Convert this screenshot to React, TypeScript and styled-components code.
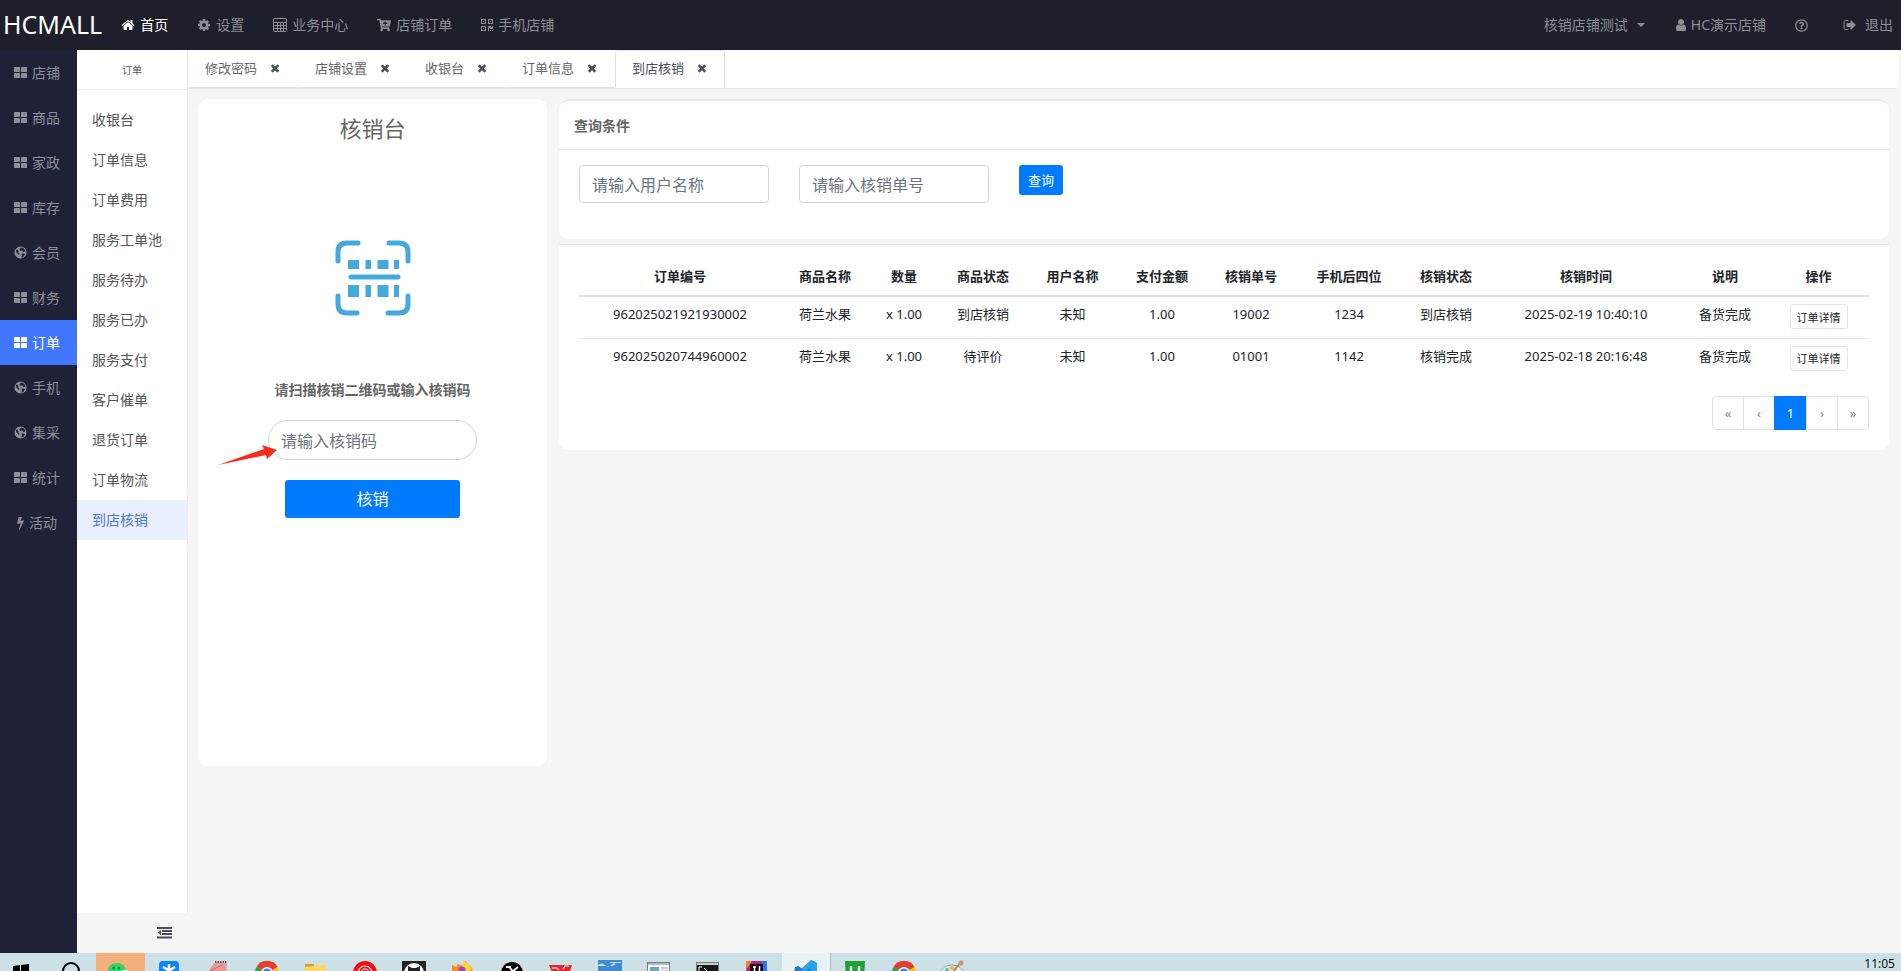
import React from "react";
import styled, { createGlobalStyle } from "styled-components";
import { FaCartPlus, FaRegQuestionCircle } from "react-icons/fa";

const Global = createGlobalStyle`
  *, *::before, *::after { box-sizing: border-box; }
  body {
    margin: 0;
    background: #f5f5f5;
    color: #212529;
    font: 13px/20px "Noto Sans", "Noto Sans CJK SC", sans-serif;
  }
  a { color: inherit; text-decoration: none; }
  button, input { font-family: inherit; }
  svg { display: block; flex: none; }
`;

/* ---------- icons ---------- */

const PATHS = {
  home: "M1472 992v480q0 26-19 45t-45 19h-384v-384h-256v384h-384q-26 0-45-19t-19-45v-480q0-1 .5-3t.5-3l575-474 575 474q1 2 1 6zm223-69l-62 74q-8 9-21 11h-3q-13 0-21-7l-692-577-692 577q-12 8-24 7-13-2-21-11l-62-74q-8-10-7-23.5t11-21.5l719-599q32-26 76-26t76 26l244 204v-195q0-14 9-23t23-9h192q14 0 23 9t9 23v408l219 182q10 8 11 21.5t-7 23.5z",
  gear: "M1152 896q0-106-75-181t-181-75-181 75-75 181 75 181 181 75 181-75 75-181zm512-109v222q0 12-8 23t-20 13l-185 28q-19 54-39 91 35 50 107 138 10 12 10 25t-9 23q-27 37-99 108t-94 71q-12 0-26-9l-138-108q-44 23-91 38-16 136-29 186-7 28-36 28h-222q-14 0-24.5-8.5t-11.5-21.5l-28-184q-49-16-90-37l-141 107q-10 9-25 9-14 0-25-11-126-114-165-168-7-10-7-23 0-12 8-23 15-21 51-66.5t54-70.5q-27-50-41-99l-183-27q-13-2-21-12.5t-8-23.5v-222q0-12 8-23t19-13l186-28q14-46 39-92-40-57-107-138-10-12-10-24 0-10 9-23 26-36 98.5-107.5t94.5-71.5q13 0 26 10l138 107q44-23 91-38 16-136 29-186 7-28 36-28h222q14 0 24.5 8.5t11.5 21.5l28 184q49 16 90 37l142-107q9-9 24-9 13 0 25 10 129 119 165 170 7 8 7 22 0 12-8 23-15 21-51 66.5t-54 70.5q26 50 41 98l183 28q13 2 21 12.5t8 23.5z",
  times: "M1490 1322q0 40-28 68l-136 136q-28 28-68 28t-68-28l-294-294-294 294q-28 28-68 28t-68-28l-136-136q-28-28-28-68t28-68l294-294-294-294q-28-28-28-68t28-68l136-136q28-28 68-28t68 28l294 294 294-294q28-28 68-28t68 28l136 136q28 28 28 68t-28 68l-294 294 294 294q28 28 28 68z",
  user: "M1536 1399q0 109-62.5 187t-150.5 78h-854q-88 0-150.5-78t-62.5-187q0-85 8.5-160.5t31.5-152 58.5-131 94-89 134.5-34.5q131 128 313 128t313-128q76 0 134.5 34.5t94 89 58.5 131 31.5 152 8.5 160.5zm-256-887q0 159-112.5 271.5t-271.5 112.5-271.5-112.5-112.5-271.5 112.5-271.5 271.5-112.5 271.5 112.5 112.5 271.5z",
  signOut: "M704 1440q0 4 1 20t.5 26.5-3 23.5-10 19.5-20.5 6.5h-320q-119 0-203.5-84.5t-84.5-203.5v-704q0-119 84.5-203.5t203.5-84.5h320q13 0 22.5 9.5t9.5 22.5q0 4 1 20t.5 26.5-3 23.5-10 19.5-20.5 6.5h-320q-66 0-113 47t-47 113v704q0 66 47 113t113 47h312l11.5 1 11.5 3 8 5.5 7 9 2 13.5zm928-544q0 26-19 45l-544 544q-19 19-45 19t-45-19-19-45v-288h-448q-26 0-45-19t-19-45v-384q0-26 19-45t45-19h448v-288q0-26 19-45t45-19 45 19l544 544q19 19 19 45z",
  bolt: "M1333 566q18 20 7 44l-540 1157q-13 25-42 25-4 0-14-2-17-5-25.5-19t-4.5-30l197-808-406 101q-4 1-12 1-18 0-31-11-18-15-13-39l201-825q4-14 16-23t28-9h328q19 0 32 12.5t13 29.5q0 8-5 18l-171 463 396-98q8-2 12-2 19 0 34 15z",
};

const Glyph = ({ name, size = 14 }: { name: keyof typeof PATHS; size?: number }) => (
  <svg width={size} height={size} viewBox="0 0 1792 1792" fill="currentColor" aria-hidden="true">
    <path d={PATHS[name]} />
  </svg>
);

const GridIcon = () => (
  <svg width="13" height="13" viewBox="0 0 13 13" fill="currentColor" aria-hidden="true">
    <rect x="0" y="1" width="6" height="5" rx="0.6" />
    <rect x="7" y="1" width="6" height="5" rx="0.6" />
    <rect x="0" y="7" width="6" height="5" rx="0.6" />
    <rect x="7" y="7" width="6" height="5" rx="0.6" />
  </svg>
);

const GlobeIcon = () => (
  <svg width="13" height="13" viewBox="0 0 13 13" fill="currentColor" fillRule="evenodd" aria-hidden="true">
    <path d="M6.500 0.500a6 6 0 1 0 0 12a6 6 0 1 0 0-12zM7 1.500L5.500 3.200L6.200 5L8.200 4.300L9.500 6.200L11.300 5.500L11 3.800L9 2zM7.500 7.200L11 8L9.600 10.500L7.300 11.700L8 9.500zM1.700 4L2.500 6.500L5 9L5.500 7.500L4.200 6.500L4.500 5.500L3.500 3.500z" />
  </svg>
);

const BoltIcon = () => (
  <svg width="7" height="14" viewBox="448 0 896 1792" fill="currentColor" aria-hidden="true">
    <path d={PATHS.bolt} />
  </svg>
);

const CalculatorIcon = () => (
  <svg width="14" height="14" viewBox="0 0 14 14" fill="none" stroke="currentColor" aria-hidden="true">
    <rect x="0.5" y="0.5" width="13" height="13" rx="0.8" />
    <path d="M1 4.500h12M1 7.500h12M1 10.500h12M4.500 5v8.500M7.500 5v8.500M10.500 5v8.500" />
  </svg>
);

const QrIcon = () => (
  <svg width="12" height="12" viewBox="0 0 12 12" fill="currentColor" aria-hidden="true">
    <g fill="none" stroke="currentColor">
      <rect x="0.5" y="0.5" width="4" height="4" />
      <rect x="7.5" y="0.5" width="4" height="4" />
      <rect x="0.5" y="7.5" width="4" height="4" />
    </g>
    <path d="M2 2h1v1H2zM9 2h1v1H9zM2 9h1v1H2zM7 7h3v1h1V7h1v3H9V9H8v3H7zM9 11h1v1H9zM11 11h1v1h-1z" />
  </svg>
);

const OutdentIcon = () => (
  <svg width="15" height="12" viewBox="0 0 15 12" fill="currentColor" aria-hidden="true">
    <path d="M0 0h15v2H0zM5 3h10v2H5zM5 6h10v2H5zM0 9.500h15v2H0zM4 3v5L0.500 5.500z" />
  </svg>
);

const ScanIcon = () => (
  <svg width="76" height="76" viewBox="0 0 76 76" fill="#45a9dd" aria-hidden="true">
    <g fill="none" stroke="#45a9dd" strokeWidth="5" strokeLinecap="round">
      <path d="M3 21V12q0-9 9-9h11M54 3h10q9 0 9 9v9M3 56v8q0 9 9 9h10M53 73h11q9 0 9-9v-8M16 37h47" />
    </g>
    <path d="M13 20h11v9H13zM30.500 20h5.500v9h-5.500zM42.500 20h11v9h-11zM59 20h5v9h-5zM13 45h11v12H13zM30.500 45h5.500v12h-5.500zM42.500 45h11v12h-11zM59 45h5v12h-5z" />
  </svg>
);

/* ---------- top bar ---------- */

const Page = styled.div`
  display: flex;
  flex-direction: column;
  min-height: 100vh;
`;

const TopBar = styled.header`
  display: flex;
  align-items: center;
  justify-content: space-between;
  height: 50px;
  padding: 0 8px 0 3px;
  background: #1e1f2b;
  color: #8d8e93;
  font-size: 14px;
`;

const TopGroup = styled.nav`
  display: flex;
  align-items: center;
  gap: 29px;
`;

const Brand = styled.a`
  margin-right: -10px;
  padding-bottom: 2px;
  color: #fff;
  font-size: 25px;
  line-height: 30px;
`;

const TopLink = styled.a<{ $active?: boolean; $gap?: number }>`
  display: flex;
  align-items: center;
  gap: ${(p) => p.$gap ?? 5}px;
  color: ${(p) => (p.$active ? "#fff" : "inherit")};
  white-space: nowrap;
`;

const HelpLink = styled(TopLink)`
  margin-right: 6px;
`;

const Caret = styled.span`
  border: 4px solid transparent;
  border-top-color: currentColor;
  border-bottom: 0;
`;

/* ---------- side menus ---------- */

const Body = styled.div`
  display: flex;
  flex: 1;
`;

const MainMenu = styled.nav`
  flex: 0 0 77px;
  background: #1f2237;
`;

const MainItem = styled.a<{ $active?: boolean }>`
  display: flex;
  align-items: center;
  justify-content: center;
  gap: 5px;
  height: 45px;
  padding-right: 3px;
  font-size: 14px;
  background: ${(p) => (p.$active ? "#4177fd" : "transparent")};
  color: ${(p) => (p.$active ? "#fff" : "#8c8e99")};
`;

const SubMenu = styled.aside`
  display: flex;
  flex-direction: column;
  flex: 0 0 111px;
`;

const SubPanel = styled.div`
  flex: 1;
  background: #fff;
  border-right: 1px solid #ececec;
`;

const SubTitle = styled.div`
  height: 40px;
  border-bottom: 1px solid #ececec;
  margin-bottom: 10px;
  font-size: 10px;
  line-height: 40px;
  text-align: center;
  color: #555;
`;

const SubItem = styled.a<{ $active?: boolean }>`
  display: block;
  padding-left: 15px;
  font-size: 14px;
  line-height: 40px;
  background: ${(p) => (p.$active ? "#e9effe" : "transparent")};
  color: ${(p) => (p.$active ? "#4a76e0" : "#555")};
`;

const Collapse = styled.button`
  display: flex;
  align-items: center;
  justify-content: flex-end;
  height: 40px;
  padding: 0 16px 0 0;
  border: 0;
  background: transparent;
  color: #4b4d58;
`;

/* ---------- tabs ---------- */

const Main = styled.main`
  flex: 1;
  min-width: 0;
`;

const TabBar = styled.div`
  display: flex;
  height: 39px;
  margin-right: 2px;
  background: #fff;
  border-bottom: 1px solid #e8e8e8;
  border-radius: 0 4px 4px 0;
`;

const Tab = styled.div<{ $active?: boolean }>`
  display: flex;
  align-items: center;
  gap: 12px;
  height: 38px;
  padding: 0 16px 2px;
  border: 1px solid ${(p) => (p.$active ? "#dee2e6" : "transparent")};
  border-bottom-color: ${(p) => (p.$active ? "#fff" : "#dee2e6")};
  border-radius: ${(p) => (p.$active ? "4px 4px 0 0" : "0")};
  color: ${(p) => (p.$active ? "#495057" : "#666")};
`;

const TabClose = styled.button`
  padding: 0;
  border: 0;
  background: none;
  color: #495057;
`;

/* ---------- content ---------- */

const Content = styled.div`
  display: flex;
  align-items: flex-start;
  gap: 12px;
  padding: 10px 12px 10px 10px;
`;

const Desk = styled.section`
  display: flex;
  flex-direction: column;
  align-items: center;
  flex: 0 0 349px;
  min-height: 667px;
  padding-top: 14px;
  background: #fff;
  border-radius: 10px;
`;

const DeskTitle = styled.h1`
  margin: 0 0 97px;
  font-size: 22px;
  line-height: 30px;
  font-weight: 400;
  color: #666;
`;

const DeskLabel = styled.label`
  margin: 64px 0 20px;
  font-size: 14px;
  font-weight: 700;
  color: #666;
`;

const Field = styled.input`
  width: 190px;
  height: 38px;
  padding: 2px 12px 0;
  border: 1px solid #ced4da;
  border-radius: 4px;
  background: #fff;
  font-size: 16px;
  outline: none;
  &::placeholder { color: #6c757d; opacity: 1; }
`;

const CodeField = styled(Field)`
  width: 209px;
  height: 40px;
  border-radius: 20px;
`;

const CodeWrap = styled.div`
  position: relative;
  margin-bottom: 20px;
`;

const Arrow = styled.svg`
  position: absolute;
  left: -50px;
  top: 24px;
`;

const Primary = styled.button`
  height: 30px;
  padding: 0 9px 2px;
  border: 0;
  border-radius: 3px;
  background: #007bff;
  color: #fff;
  font-size: 13px;
`;

const WidePrimary = styled(Primary)`
  width: 175px;
  height: 38px;
  font-size: 16px;
`;

const Results = styled.div`
  flex: 1;
  min-width: 0;
`;

const QueryCard = styled.section`
  height: 140px;
  margin-bottom: 5px;
  background: #fff;
  border-top: 2px solid #e7e8e9;
  border-radius: 10px;
`;

const QueryTitle = styled.h2`
  margin: 0;
  padding: 2px 15px 0;
  border-bottom: 1px solid #e7e8e9;
  font-size: 14px;
  line-height: 46px;
  font-weight: 700;
  color: #666;
`;

const QueryForm = styled.form`
  display: flex;
  align-items: flex-start;
  gap: 30px;
  padding: 15px 20px;
`;

const TableCard = styled.section`
  padding: 13px 20px 20px;
  background: #fff;
  border-top: 1px solid #e4e6e8;
  border-radius: 0 0 10px 10px;
`;

const Table = styled.table`
  width: 100%;
  table-layout: fixed;
  border-collapse: collapse;
  text-align: center;
`;

const Th = styled.th`
  height: 38px;
  padding: 0 0 1px;
  border-bottom: 2px solid #dee2e6;
  font-weight: 700;
`;

const Tr = styled.tr`
  & + & td { border-top: 1px solid #e3e5e7; }
`;

const Td = styled.td`
  height: 42px;
  padding: 7px 0 0;
  vertical-align: top;
  white-space: nowrap;
`;

const Detail = styled.button`
  height: 25px;
  padding: 0 6px;
  border: 1px solid #e2e4e6;
  border-radius: 3px;
  background: #fff;
  color: #212529;
  font-size: 11px;
`;

const Pager = styled.nav`
  display: flex;
  justify-content: flex-end;
  margin-top: 16px;
`;

const PageLink = styled.a<{ $current?: boolean }>`
  width: ${(p) => (p.$current ? 33 : 32)}px;
  height: 34px;
  margin-left: -1px;
  border: 1px solid ${(p) => (p.$current ? "#007bff" : "#dee2e6")};
  background: ${(p) => (p.$current ? "#007bff" : "#fff")};
  color: ${(p) => (p.$current ? "#fff" : "#7f858c")};
  font-size: 13px;
  line-height: 32px;
  text-align: center;
  &:first-child { border-radius: 4px 0 0 4px; }
  &:last-child { border-radius: 0 4px 4px 0; }
`;

/* ---------- task bar ---------- */

const TaskBar = styled.footer`
  display: flex;
  height: 18px;
  overflow: hidden;
  background: #cce0e6;
`;

const Task = styled.div<{ $bg?: string; $line?: boolean }>`
  flex: 0 0 49px;
  height: 18px;
  padding: 7px 0 0 12px;
  background: ${(p) => p.$bg ?? "transparent"};
  border-right: ${(p) => (p.$line ? "1px solid #a9bcc4" : "0")};
  &:first-child { flex-basis: 47px; }
`;

const Clock = styled.time`
  margin-left: auto;
  padding: 1px 6px 0 0;
  font-size: 12px;
  line-height: 20px;
  color: #111;
`;

const Chrome = () => (
  <>
    <circle cx="12" cy="13" r="12" fill="#fbc116" />
    <path d="M12 13L1.500 7A12 12 0 0 1 22.500 7z" fill="#dd4132" />
    <path d="M12 13L1.500 7A12 12 0 0 0 12 25z" fill="#2f9e4f" />
    <circle cx="12" cy="13" r="6" fill="#fff" />
    <circle cx="12" cy="13" r="4.500" fill="#3f7fe8" />
  </>
);

const TASKS: { name: string; bg?: string; line?: boolean; art: React.ReactNode }[] = [
  { name: "start", art: <path d="M1 6l7-1v8H1zM9 5l8-1v9H9z" fill="#000" /> },
  { name: "search", art: <circle cx="12" cy="11" r="8" fill="none" stroke="#000" strokeWidth="2" /> },
  { name: "wechat", bg: "#f4b07c", art: <><ellipse cx="9" cy="11" rx="9" ry="8" fill="#33d466" /><circle cx="5.500" cy="8" r="1.300" fill="#157a36" /><circle cx="11" cy="8" r="1.300" fill="#157a36" /><ellipse cx="17" cy="15" rx="6" ry="5" fill="#f2f7f2" /></> },
  { name: "notes", art: <><rect x="2" y="1" width="20" height="20" rx="4" fill="#0a84ff" /><path d="M12 4v12M6 7l12 7M18 7L6 14" stroke="#fff" strokeWidth="2.500" /></> },
  { name: "notebook", art: <><path d="M9 2l12 1-1 12-19-2z" fill="#e59a98" /><path d="M9 2h12" stroke="#6d5454" strokeWidth="2" strokeDasharray="1.500 1" /><path d="M4 11l12-6" stroke="#c96f6d" /></> },
  { name: "chrome", art: <Chrome /> },
  { name: "folder", art: <><path d="M1 4h9v8H1z" fill="#d9a41c" /><path d="M1 7l10-1 1-1h10v10H1z" fill="#fbd668" /></> },
  { name: "music", art: <><circle cx="12" cy="13" r="12" fill="#f50d12" /><g fill="none" stroke="#fff" strokeWidth="1.200"><circle cx="12" cy="13" r="7" /><circle cx="12" cy="13" r="4" /></g></> },
  { name: "github", art: <><rect y="1" width="24" height="24" fill="#222" /><circle cx="12" cy="13" r="10" fill="#fff" /><path d="M6 6l4 2h4l4-2v12H6z" fill="#222" /></> },
  { name: "firefox", art: <><path d="M1 5l4 2 2-3 5 2 2-5 4 4 3 3 2 12H1z" fill="#ff8a1c" /><path d="M12 1l5 3 4 5-4 4-6-4z" fill="#ffd52e" /><circle cx="11" cy="10" r="3.500" fill="#9746d8" /></> },
  { name: "capcut", art: <><circle cx="12" cy="13" r="11" fill="#000" /><path d="M6 7h3l9 10M18 7L6 17M6 7h5" stroke="#fff" strokeWidth="1.800" fill="none" /></> },
  { name: "wps", art: <><path d="M0 5h23l-4 12h-5l-2-3-2 3H5z" fill="#e1272d" /><path d="M3 8h5l2 2M14 9l2-3h4" stroke="#fff" strokeWidth="1.200" fill="none" /></> },
  { name: "pictures", art: <><rect width="24" height="20" fill="#3d8bd3" /><path d="M0 5q4-3 7 0t6 0 5-1l-4 2H0zM12 2h11v1H12z" fill="#c4dff3" /></> },
  { name: "window", art: <><rect x="0.500" y="2.500" width="22" height="18" fill="#f6f8f9" stroke="#737b80" /><path d="M1 4h21" stroke="#737b80" /><path d="M3 7h9v9H3z" fill="#6fa3be" /><path d="M14 8h7M14 11h7" stroke="#8aa" /></> },
  { name: "terminal", art: <><rect x="0.500" y="2.500" width="22" height="18" fill="#191919" stroke="#777" /><path d="M1 4h21" stroke="#ccc" strokeWidth="2" /><path d="M3 7h3M3 7v5M8 8l4 4" stroke="#fff" /></> },
  { name: "idea", art: <><path d="M1 1h12l-12 12z" fill="#f58529" /><path d="M7 1h15v19H1V10z" fill="#c21c80" /><path d="M16 1h6v19h-6z" fill="#2f6ff0" /><rect x="5" y="4" width="13" height="14" fill="#100818" /><path d="M8 7h3M9.500 7v7M14.500 6v7" stroke="#fff" strokeWidth="1.500" /></> },
  { name: "vscode", bg: "#e9f2f6", line: true, art: <><path d="M17 0l6 3v16l-6 3L7 12l-5 4-2-2 1-7 3-1 6 4z" fill="#1b80c4" /><path d="M17 0l6 3v16h-6V7l-6 5-4-3z" fill="#2aa3ea" /></> },
  { name: "hbuilder", art: <><path d="M2 1h20l-1 20H3z" fill="#1fa135" /><path d="M8 6v12M16 6v12" stroke="#e9fbe9" strokeWidth="2.500" /></> },
  { name: "chrome-2", art: <Chrome /> },
  { name: "paint", art: <><ellipse cx="11" cy="13" rx="11" ry="8" fill="#e7eff0" stroke="#83a9b8" /><circle cx="6" cy="10" r="2" fill="#6bb86a" /><circle cx="11" cy="8" r="2" fill="#e6b53b" /><path d="M20 2L12 12" stroke="#b98245" strokeWidth="2" /><circle cx="20" cy="3" r="2.500" fill="#c79a6a" /></> },
];

/* ---------- data ---------- */

const MAIN: { label: string; icon: React.ReactNode }[] = [
  { label: "店铺", icon: <GridIcon /> },
  { label: "商品", icon: <GridIcon /> },
  { label: "家政", icon: <GridIcon /> },
  { label: "库存", icon: <GridIcon /> },
  { label: "会员", icon: <GlobeIcon /> },
  { label: "财务", icon: <GridIcon /> },
  { label: "订单", icon: <GridIcon /> },
  { label: "手机", icon: <GlobeIcon /> },
  { label: "集采", icon: <GlobeIcon /> },
  { label: "统计", icon: <GridIcon /> },
  { label: "活动", icon: <BoltIcon /> },
];

const SUB = ["收银台", "订单信息", "订单费用", "服务工单池", "服务待办", "服务已办", "服务支付", "客户催单", "退货订单", "订单物流", "到店核销"];
const TABS = ["修改密码", "店铺设置", "收银台", "订单信息", "到店核销"];

const COLUMNS: [string, number][] = [
  ["订单编号", 202], ["商品名称", 88], ["数量", 70], ["商品状态", 88], ["用户名称", 91], ["支付金额", 88],
  ["核销单号", 90], ["手机后四位", 106], ["核销状态", 88], ["核销时间", 192], ["说明", 86], ["操作", 101],
];

const ROWS = [
  ["962025021921930002", "荷兰水果", "x 1.00", "到店核销", "未知", "1.00", "19002", "1234", "到店核销", "2025-02-19 10:40:10", "备货完成"],
  ["962025020744960002", "荷兰水果", "x 1.00", "待评价", "未知", "1.00", "01001", "1142", "核销完成", "2025-02-18 20:16:48", "备货完成"],
];

const Col = styled.col<{ $w: number }>`
  width: ${(p) => p.$w}px;
`;

export default function App() {
  return (
    <Page>
      <Global />
      <TopBar>
        <TopGroup>
          <Brand href="#">HCMALL</Brand>
          <TopLink href="#" $active><Glyph name="home" />首页</TopLink>
          <TopLink href="#"><Glyph name="gear" />设置</TopLink>
          <TopLink href="#"><CalculatorIcon />业务中心</TopLink>
          <TopLink href="#"><FaCartPlus size={14} />店铺订单</TopLink>
          <TopLink href="#"><QrIcon />手机店铺</TopLink>
        </TopGroup>
        <TopGroup>
          <TopLink href="#" $gap={9}>核销店铺测试<Caret /></TopLink>
          <TopLink href="#" $gap={3}><Glyph name="user" />HC演示店铺</TopLink>
          <HelpLink href="#" aria-label="帮助"><FaRegQuestionCircle size={13} /></HelpLink>
          <TopLink href="#" $gap={8}><Glyph name="signOut" />退出</TopLink>
        </TopGroup>
      </TopBar>

      <Body>
        <MainMenu>
          {MAIN.map((m) => (
            <MainItem key={m.label} href="#" $active={m.label === "订单"}>{m.icon}{m.label}</MainItem>
          ))}
        </MainMenu>

        <SubMenu>
          <SubPanel>
            <SubTitle>订单</SubTitle>
            {SUB.map((s) => (
              <SubItem key={s} href="#" $active={s === "到店核销"}>{s}</SubItem>
            ))}
          </SubPanel>
          <Collapse type="button" aria-label="收起菜单"><OutdentIcon /></Collapse>
        </SubMenu>

        <Main>
          <TabBar>
            {TABS.map((t) => (
              <Tab key={t} $active={t === "到店核销"}>
                <a href="#">{t}</a>
                <TabClose type="button" aria-label={`关闭${t}`}><Glyph name="times" size={12} /></TabClose>
              </Tab>
            ))}
          </TabBar>

          <Content>
            <Desk>
              <DeskTitle>核销台</DeskTitle>
              <ScanIcon />
              <DeskLabel htmlFor="code">请扫描核销二维码或输入核销码</DeskLabel>
              <CodeWrap>
                <CodeField id="code" placeholder="请输入核销码" />
                <Arrow width="60" height="24" viewBox="0 0 60 24" aria-hidden="true">
                  <path d="M0 21L46 5l-2-4 15 5-10 9-1-4z" fill="#fb2a1b" />
                </Arrow>
              </CodeWrap>
              <WidePrimary type="button">核销</WidePrimary>
            </Desk>

            <Results>
              <QueryCard>
                <QueryTitle>查询条件</QueryTitle>
                <QueryForm>
                  <Field aria-label="用户名称" placeholder="请输入用户名称" />
                  <Field aria-label="核销单号" placeholder="请输入核销单号" />
                  <Primary type="button">查询</Primary>
                </QueryForm>
              </QueryCard>

              <TableCard>
                <Table>
                  <colgroup>{COLUMNS.map(([c, w]) => <Col key={c} $w={w} />)}</colgroup>
                  <thead>
                    <tr>{COLUMNS.map(([c]) => <Th key={c} scope="col">{c}</Th>)}</tr>
                  </thead>
                  <tbody>
                    {ROWS.map((r) => (
                      <Tr key={r[0]}>
                        {r.map((v, i) => <Td key={i}>{v}</Td>)}
                        <Td><Detail type="button">订单详情</Detail></Td>
                      </Tr>
                    ))}
                  </tbody>
                </Table>
                <Pager aria-label="分页">
                  <PageLink href="#">«</PageLink>
                  <PageLink href="#">‹</PageLink>
                  <PageLink href="#" $current>1</PageLink>
                  <PageLink href="#">›</PageLink>
                  <PageLink href="#">»</PageLink>
                </Pager>
              </TableCard>
            </Results>
          </Content>
        </Main>
      </Body>

      <TaskBar>
        {TASKS.map((t) => (
          <Task key={t.name} $bg={t.bg} $line={t.line}>
            <svg width="24" height="24" viewBox="0 0 24 24" aria-hidden="true">{t.art}</svg>
          </Task>
        ))}
        <Clock>11:05</Clock>
      </TaskBar>
    </Page>
  );
}
